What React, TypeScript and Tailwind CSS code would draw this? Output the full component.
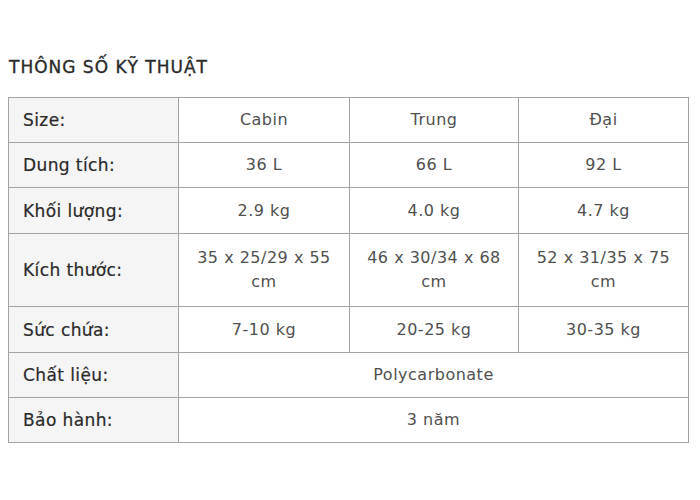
import React from "react";

const rows: { label: string; values: string[]; pad: string }[] = [
  { label: "Size:", values: ["Cabin", "Trung", "Đại"], pad: "py-[10px]" },
  { label: "Dung tích:", values: ["36 L", "66 L", "92 L"], pad: "py-[10px]" },
  { label: "Khối lượng:", values: ["2.9 kg", "4.0 kg", "4.7 kg"], pad: "py-[10.5px]" },
  { label: "Kích thước:", values: ["35 x 25/29 x 55 cm", "46 x 30/34 x 68 cm", "52 x 31/35 x 75 cm"], pad: "py-[12px]" },
  { label: "Sức chứa:", values: ["7-10 kg", "20-25 kg", "30-35 kg"], pad: "py-[10.5px]" },
  { label: "Chất liệu:", values: ["Polycarbonate"], pad: "py-[10px]" },
  { label: "Bảo hành:", values: ["3 năm"], pad: "py-[10px]" },
];

export default function App() {
  return (
    <div
      className="w-[700px] h-[500px] bg-white pl-[8px] pt-[55px]"
      style={{ fontFamily: "'DejaVu Sans', sans-serif" }}
    >
      <h2 className="text-[17px] font-normal text-[#2a2a2a] leading-[24px] tracking-[1px] ml-[1px] [-webkit-text-stroke:0.35px_#2a2a2a]">
        THÔNG SỐ KỸ THUẬT
      </h2>
      <table className="mt-[18px] w-[680px] border-collapse table-fixed text-[16px] leading-[24px]">
        <colgroup>
          <col className="w-[170px]" />
          <col className="w-[171px]" />
          <col className="w-[169px]" />
          <col className="w-[170px]" />
        </colgroup>
        <tbody>
          {rows.map((r) => (
            <tr key={r.label}>
              <td
                className={`border border-[#a3a3a3] bg-[#f5f5f5] px-[14px] text-[17px] tracking-[0.4px] text-[#2a2a2a] align-middle [-webkit-text-stroke:0.2px_#2a2a2a] ${r.pad}`}
              >
                {r.label}
              </td>
              {r.values.length === 1 ? (
                <td
                  colSpan={3}
                  className={`border border-[#a3a3a3] px-[12px] text-center tracking-[0.5px] text-[#505050] ${r.pad}`}
                >
                  {r.values[0]}
                </td>
              ) : (
                r.values.map((v, i) => (
                  <td
                    key={i}
                    className={`border border-[#a3a3a3] px-[12px] text-center tracking-[0.5px] text-[#505050] align-middle ${r.pad}`}
                  >
                    {v}
                  </td>
                ))
              )}
            </tr>
          ))}
        </tbody>
      </table>
    </div>
  );
}
